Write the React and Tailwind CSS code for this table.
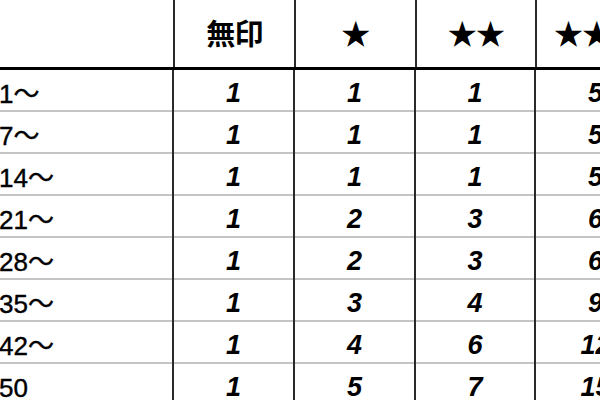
import React from "react";

const headers = ["無印", "★", "★★", "★★★"];

const rows = [
  { label: "1～", values: [1, 1, 1, 5] },
  { label: "7～", values: [1, 1, 1, 5] },
  { label: "14～", values: [1, 1, 1, 5] },
  { label: "21～", values: [1, 2, 3, 6] },
  { label: "28～", values: [1, 2, 3, 6] },
  { label: "35～", values: [1, 3, 4, 9] },
  { label: "42～", values: [1, 4, 6, 12] },
  { label: "50", values: [1, 5, 7, 15] },
];

const colWidths = ["w-[121px]", "w-[121px]", "w-[120px]", "w-[121px]"];

const App = () => {
  return (
    <div
      className="w-[600px] h-[400px] overflow-hidden bg-white text-black"
      style={{ fontFamily: '"Liberation Sans", "Noto Sans CJK JP", sans-serif' }}
    >
      <div className="w-[700px]">
        {/* header */}
        <div className="flex h-[70px] border-b-[3px] border-black">
          <div className="w-[173px] shrink-0"></div>
          {headers.map((h, i) => (
            <div
              key={i}
              className={`${colWidths[i]} shrink-0 border-l-2 border-[#2a2a2a] flex items-center justify-center pt-1 text-[29px] font-bold tracking-tight`}
            >
              {h}
            </div>
          ))}
        </div>

        {rows.map((row, r) => (
          <div key={r} className="flex h-[42px] border-b-2 border-[#c4c4c4]">
            <div className="w-[173px] shrink-0 flex items-center pt-2 text-[26px] -ml-[1px] [-webkit-text-stroke:0.4px_black]">
              {row.label}
            </div>
            {row.values.map((v, i) => (
              <div
                key={i}
                className={`${colWidths[i]} shrink-0 border-l-2 border-[#2a2a2a] -mb-[2px] flex items-center justify-center pt-1 text-[27px] font-bold italic`}
              >
                {v}
              </div>
            ))}
          </div>
        ))}
      </div>
    </div>
  );
};

export default App;
